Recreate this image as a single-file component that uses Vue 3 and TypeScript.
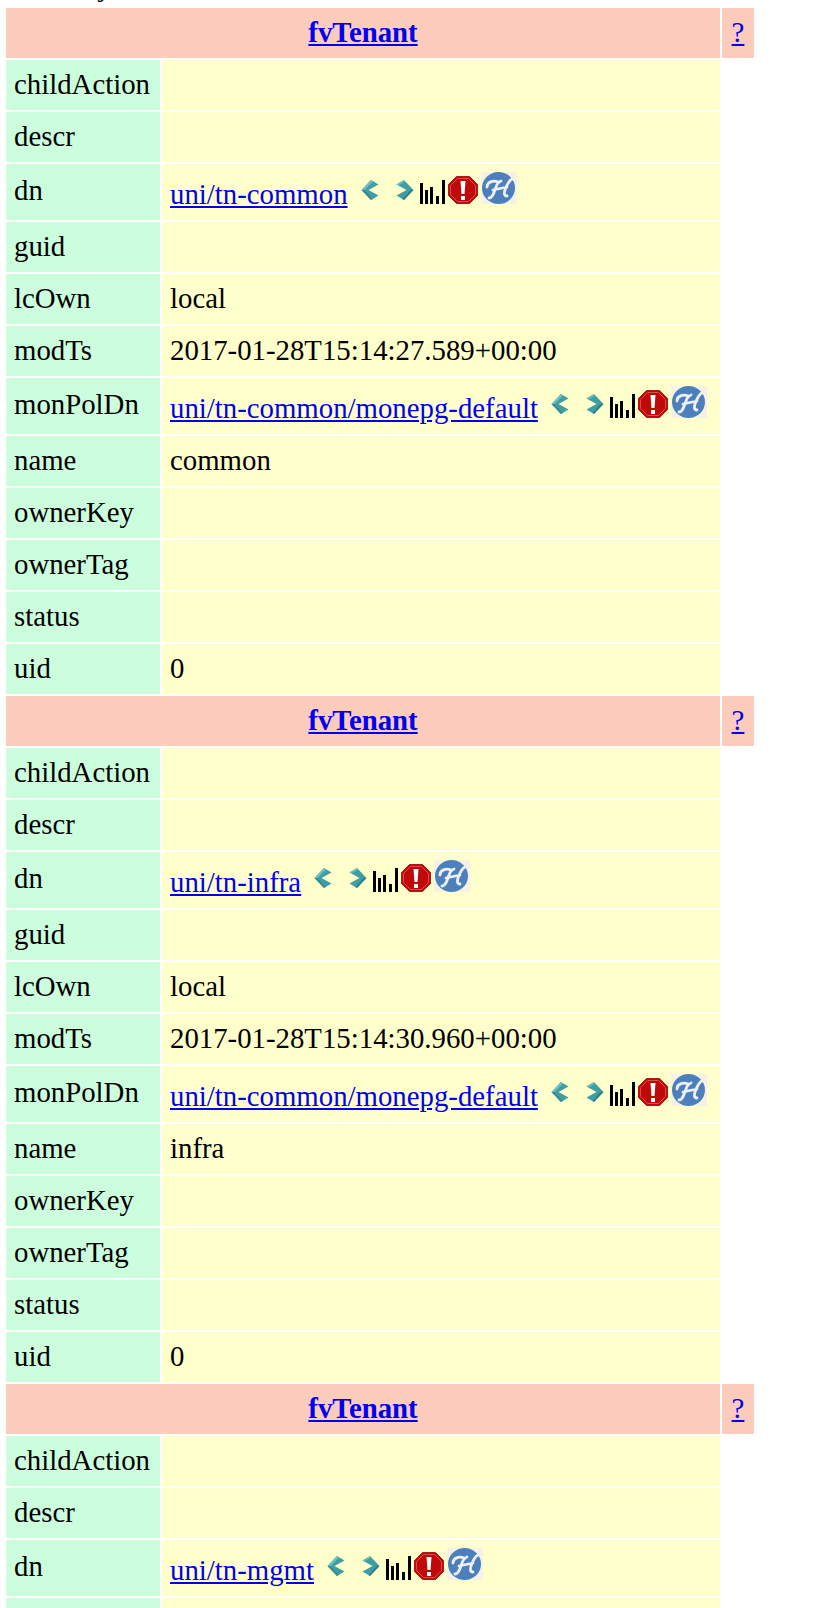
<script setup lang="ts">
interface Row { key: string; value?: string; link?: string; tall?: boolean }
const tenants: { name: string; ts: string; partial?: boolean }[] = [
  { name: 'common', ts: '2017-01-28T15:14:27.589+00:00' },
  { name: 'infra', ts: '2017-01-28T15:14:30.960+00:00' },
  { name: 'mgmt', ts: '', partial: true },
]
function rows(t: { name: string; ts: string; partial?: boolean }): Row[] {
  const all: Row[] = [
    { key: 'childAction' },
    { key: 'descr' },
    { key: 'dn', link: `uni/tn-${t.name}`, tall: true },
    { key: 'guid' },
    { key: 'lcOwn', value: 'local' },
    { key: 'modTs', value: t.ts },
    { key: 'monPolDn', link: 'uni/tn-common/monepg-default', tall: true },
    { key: 'name', value: t.name },
    { key: 'ownerKey' },
    { key: 'ownerTag' },
    { key: 'status' },
    { key: 'uid', value: '0' },
  ]
  return t.partial ? all.slice(0, 4) : all
}
</script>

<template>
  <div class="page">
    <div class="cut">Total objects shown: 3</div>
    <table class="mo">
      <colgroup>
        <col class="c1" />
        <col class="c2" />
        <col class="c3" />
      </colgroup>
      <tbody>
        <template v-for="t in tenants" :key="t.name">
          <tr class="head">
            <th colspan="2"><a href="#">fvTenant</a></th>
            <td class="help"><a href="#">?</a></td>
          </tr>
          <tr v-for="r in rows(t)" :key="r.key" :class="{ tall: r.tall }">
            <td class="k">{{ r.key }}</td>
            <td class="v">
              <template v-if="r.link">
                <a href="#">{{ r.link }}</a>
                <span class="icons">
                  <svg class="chev" viewBox="0 0 18 20" width="18" height="20">
                    <path d="M0.500 10 L10 0 L17.500 4.500 L7.500 10 L17.500 15.500 L10 20 Z" fill="#3f9ea4" />
                    <path d="M0.500 10 L10 0 L12 1.500 L3.500 10 Z" fill="#6cc0c2" />
                    <path d="M3.500 10 L0.500 10 L10 20 L11.500 19 Z" fill="#348a92" />
                  </svg>
                  <svg class="chev next" viewBox="0 0 18 20" width="18" height="20">
                    <path d="M17.500 10 L8 0 L0.500 4.500 L10.500 10 L0.500 15.500 L8 20 Z" fill="#3f9ea4" />
                    <path d="M8 0 L0.500 4.500 L3 5 L9 1.500 Z" fill="#6cc0c2" />
                    <path d="M17.500 10 L14.500 10 L6.500 19 L8 20 Z" fill="#2f818a" />
                  </svg>
                  <svg class="bars" viewBox="0 0 25 24" width="25" height="24">
                    <path d="M0 3h3v21H0zM5 10h3v14H5zM10 7h3v17h-3zM16 16h3v8h-3zM22 0h3v24h-3z" fill="#000" />
                  </svg>
                  <svg class="stop" viewBox="0 0 30 28" width="30" height="28">
                    <path d="M8.500 0.500h13l8 8v11l-8 8h-13l-8-8v-11z" fill="#c00a0a" stroke="#a51e1e" />
                    <path d="M9.500 2.500h11l7 7v9l-7 7h-11l-7-7v-9z" fill="none" stroke="#e04a4a" />
                    <path d="M12.500 5h5l-1 13h-3z" fill="#fff" />
                    <rect x="13" y="20" width="4" height="4" fill="#fff" />
                  </svg>
                  <svg class="hist" viewBox="0 0 36 32" width="36" height="32">
                    <rect width="36" height="32" fill="#f6f1e6" />
                    <ellipse cx="17.500" cy="16" rx="16.500" ry="16" fill="#4b80bd" />
                    <path d="M8 26C12 26 13 20 15 15C16 12 17 10 20 9M6 15C6 10 12 8 17 10M31 7C27 9 26 13 24 18C23 21 23 24 26 24M12 18L26 15" fill="none" stroke="#eef0fa" stroke-width="2.800" stroke-linecap="round" />
                  </svg>
                </span>
              </template>
              <template v-else>{{ r.value }}</template>
            </td>
          </tr>
        </template>
      </tbody>
    </table>
  </div>
</template>

<style>
html, body { margin: 0; background: #fff; }
</style>

<style scoped>
.page {
  height: 1608px;
  overflow: hidden;
  font-family: "Liberation Serif", "Times New Roman", serif;
  font-size: 28.8px;
  color: #000;
}
.cut {
  height: 33px;
  line-height: 33px;
  margin-top: -30px;
  padding-left: 4px;
  white-space: nowrap;
}
.mo {
  border-collapse: separate;
  border-spacing: 2px;
  table-layout: fixed;
  width: 752px;
  margin: 3px 0 0 4px;
}
.c1 { width: 154px; }
.c2 { width: 558px; }
.c3 { width: 32px; }
a { color: #00e; text-decoration: underline; }
tr { height: 50px; }
tr.tall { height: 56px; }
th, td { padding: 0 8px 2px; font-weight: normal; vertical-align: middle; }
.head th { background: #fbcbbb; text-align: center; font-weight: bold; padding: 0 0 2px; }
.head .help { background: #fbcbbb; text-align: center; padding: 0 0 2px; }
.k { background: #ccfedd; white-space: nowrap; }
.v { background: #ffffcc; white-space: nowrap; padding-right: 0; }
.tall .k { padding-bottom: 4px; }
.tall .v { padding-bottom: 2px; }
.icons { margin-left: 13px; }
.icons svg { vertical-align: baseline; }
.icons .chev { vertical-align: 4px; }
.next { margin-left: 17px; }
.bars { margin-left: 6px; }
.icons .stop { margin-left: 3px; }
.hist { margin-left: 3px; }
</style>
